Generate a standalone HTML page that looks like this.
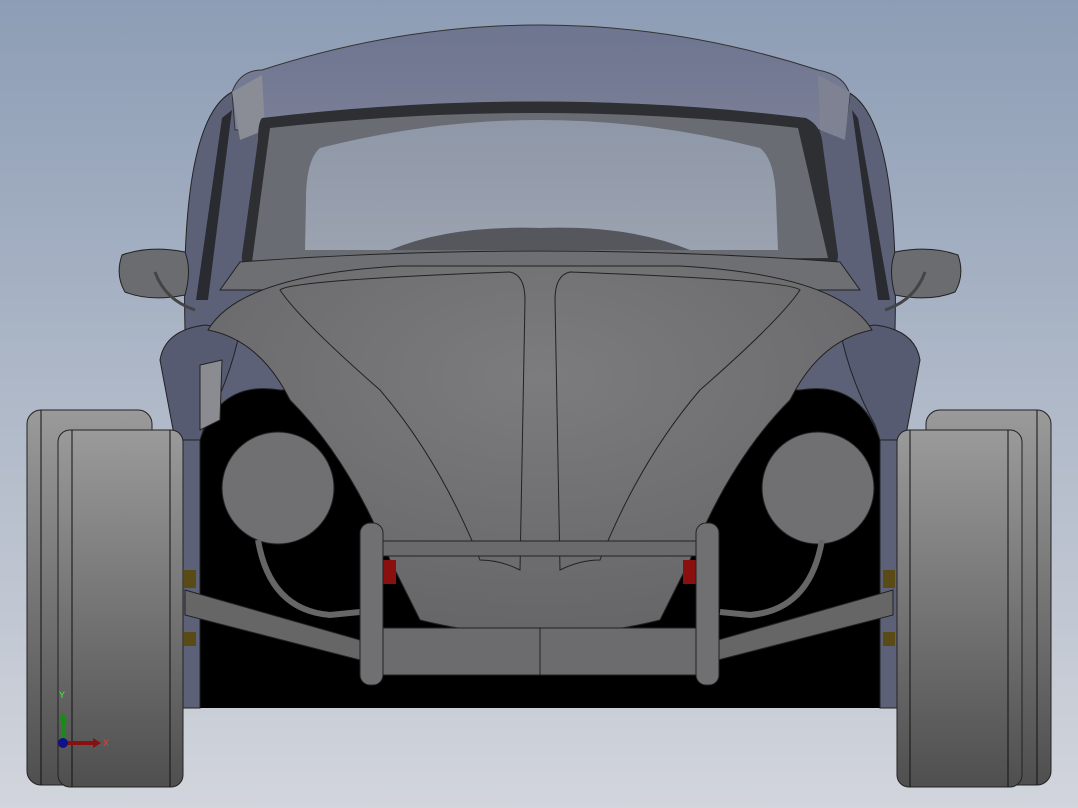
<!DOCTYPE html>
<html><head><meta charset="utf-8"><style>
html,body{margin:0;padding:0;width:1078px;height:808px;overflow:hidden}
svg{display:block}
</style></head><body>
<svg width="1078" height="808" viewBox="0 0 1078 808" xmlns="http://www.w3.org/2000/svg">
<defs>
<linearGradient id="bg" x1="0" y1="0" x2="0" y2="1">
<stop offset="0" stop-color="#8d9db5"/><stop offset="1" stop-color="#d2d5dc"/></linearGradient>
<linearGradient id="tire" x1="0" y1="0" x2="0" y2="1">
<stop offset="0" stop-color="#9a9a9a"/><stop offset="1" stop-color="#4f4f4f"/></linearGradient>
<linearGradient id="roof" x1="0" y1="0" x2="0" y2="1">
<stop offset="0" stop-color="#6e7590"/><stop offset="1" stop-color="#7a7f96"/></linearGradient>
<linearGradient id="glass" x1="0" y1="0" x2="0" y2="1">
<stop offset="0" stop-color="#8f98a8"/><stop offset="1" stop-color="#9ba2b0"/></linearGradient>
<radialGradient id="hood" cx="0.5" cy="0.3" r="0.7">
<stop offset="0" stop-color="#7c7c7e"/><stop offset="1" stop-color="#666668"/></radialGradient>
</defs>
<rect width="1078" height="808" fill="url(#bg)"/>
<rect x="185" y="380" width="710" height="328" fill="#000"/>
<path d="M185 330 Q180 120 232 92 L848 92 Q900 120 895 330 L905 420 L900 708 L880 708 L880 440 Q860 380 800 390 L280 390 Q220 380 200 440 L200 708 L180 708 L175 420 Z" fill="#5c6178" stroke="#222" stroke-width="1"/>
<path d="M232 92 Q240 70 262 70 Q540 -20 818 70 Q845 75 850 95 L845 130 L235 130 Z" fill="url(#roof)" stroke="#333" stroke-width="1"/>
<path d="M232 92 L262 75 L265 130 L240 140 Z" fill="#8a8d96"/>
<path d="M818 75 L850 92 L845 140 L820 130 Z" fill="#7e8292"/>
<!-- windshield frame -->
<path d="M262 118 Q540 85 806 118 Q820 125 822 140 L838 255 Q838 268 826 270 L257 270 Q240 268 242 255 L258 140 Q258 122 262 118 Z" fill="#2e2f33"/>
<path d="M270 128 Q540 98 798 128 L828 258 L252 262 Z" fill="#6a6c73"/>
<path d="M320 148 Q540 92 760 148 Q775 160 776 200 L778 250 L305 250 L306 200 Q306 160 320 148 Z" fill="url(#glass)"/>
<path d="M390 250 Q450 225 540 228 Q630 225 690 250 Z" fill="#55575c"/>
<path d="M222 118 L232 110 L208 300 L196 300 Z" fill="#2a2b30"/>
<path d="M852 110 L858 118 L890 300 L878 300 Z" fill="#2a2b30"/>
<path d="M240 262 Q540 240 840 262 L860 290 L220 290 Z" fill="#6e6f73" stroke="#222" stroke-width="1"/>
<path d="M160 360 Q165 330 205 325 L240 330 Q230 380 205 425 L200 440 L175 440 Z" fill="#565b72" stroke="#222"/>
<path d="M920 360 Q915 330 875 325 L840 330 Q850 380 875 425 L880 440 L905 440 Z" fill="#565b72" stroke="#222"/>
<path d="M208 330 Q240 275 400 266 L680 266 Q840 275 872 330 Q820 340 790 400 Q730 460 690 560 L660 620 Q540 650 420 620 L390 560 Q350 460 290 400 Q260 340 208 330 Z" fill="url(#hood)" stroke="#222" stroke-width="1"/>
<path d="M280 290 Q290 280 510 272 Q525 275 525 300 L520 570 Q500 560 480 560 Q440 460 380 390 Q300 320 280 290 Z" fill="none" stroke="#222" stroke-width="1"/>
<path d="M800 290 Q790 280 570 272 Q555 275 555 300 L560 570 Q580 560 600 560 Q640 460 700 390 Q780 320 800 290 Z" fill="none" stroke="#222" stroke-width="1"/>
<path d="M200 365 L222 360 L220 420 L200 430 Z" fill="#8a8c92" stroke="#222"/>
<circle cx="278" cy="488" r="56" fill="#707072" stroke="#222"/>
<circle cx="818" cy="488" r="56" fill="#707072" stroke="#222"/>
<rect x="382" y="560" width="14" height="24" fill="#8a1010"/>
<rect x="683" y="560" width="14" height="24" fill="#8a1010"/>
<path d="M258 540 Q270 610 330 615 L360 612" fill="none" stroke="#666" stroke-width="6"/>
<path d="M822 540 Q810 610 750 615 L720 612" fill="none" stroke="#666" stroke-width="6"/>
<path d="M185 590 L360 640 L360 660 L185 615 Z" fill="#666" stroke="#222"/>
<path d="M893 590 L718 640 L718 660 L893 615 Z" fill="#666" stroke="#222"/>
<rect x="184" y="570" width="12" height="18" fill="#5a4a15"/>
<rect x="184" y="632" width="12" height="14" fill="#5a4a15"/>
<rect x="883" y="570" width="12" height="18" fill="#5a4a15"/>
<rect x="883" y="632" width="12" height="14" fill="#5a4a15"/>
<rect x="383" y="541" width="314" height="15" fill="#6a6a6c" stroke="#222"/>
<rect x="372" y="628" width="336" height="47" fill="#6c6c6e" stroke="#222"/>
<line x1="540" y1="628" x2="540" y2="675" stroke="#222"/>
<rect x="360" y="523" width="23" height="162" rx="10" fill="#707072" stroke="#222"/>
<rect x="696" y="523" width="23" height="162" rx="10" fill="#707072" stroke="#222"/>
<path d="M122 255 Q150 245 185 252 Q192 270 185 295 Q150 302 125 292 Q115 275 122 255 Z" fill="#6b6c70" stroke="#222"/>
<path d="M958 255 Q930 245 895 252 Q888 270 895 295 Q930 302 955 292 Q965 275 958 255 Z" fill="#6b6c70" stroke="#222"/>
<path d="M155 272 Q165 300 195 310" fill="none" stroke="#444" stroke-width="3"/>
<path d="M925 272 Q915 300 885 310" fill="none" stroke="#444" stroke-width="3"/>
<rect x="27" y="410" width="125" height="375" rx="14" fill="url(#tire)" stroke="#222"/>
<line x1="41" y1="410" x2="41" y2="785" stroke="#111"/>
<rect x="58" y="430" width="125" height="357" rx="12" fill="url(#tire)" stroke="#222"/>
<line x1="72" y1="430" x2="72" y2="787" stroke="#111"/>
<line x1="170" y1="430" x2="170" y2="787" stroke="#111"/>
<rect x="926" y="410" width="125" height="375" rx="14" fill="url(#tire)" stroke="#222"/>
<line x1="1037" y1="410" x2="1037" y2="785" stroke="#111"/>
<rect x="897" y="430" width="125" height="357" rx="12" fill="url(#tire)" stroke="#222"/>
<line x1="910" y1="430" x2="910" y2="787" stroke="#111"/>
<line x1="1008" y1="430" x2="1008" y2="787" stroke="#111"/>
<path d="M63 743 L63 720" stroke="#1a8a1a" stroke-width="4"/>
<path d="M58 722 L63 712 L68 722 Z" fill="#1a8a1a"/>
<path d="M63 743 L95 743" stroke="#8a1010" stroke-width="4"/>
<path d="M93 738 L101 743 L93 748 Z" fill="#8a1010"/>
<circle cx="63" cy="743" r="5" fill="#10108a"/>
<text x="59" y="698" font-family="Liberation Sans, sans-serif" font-size="9" fill="#3f3">Y</text>
<text x="103" y="746" font-family="Liberation Sans, sans-serif" font-size="9" fill="#f33">X</text>
</svg>
</body></html>
